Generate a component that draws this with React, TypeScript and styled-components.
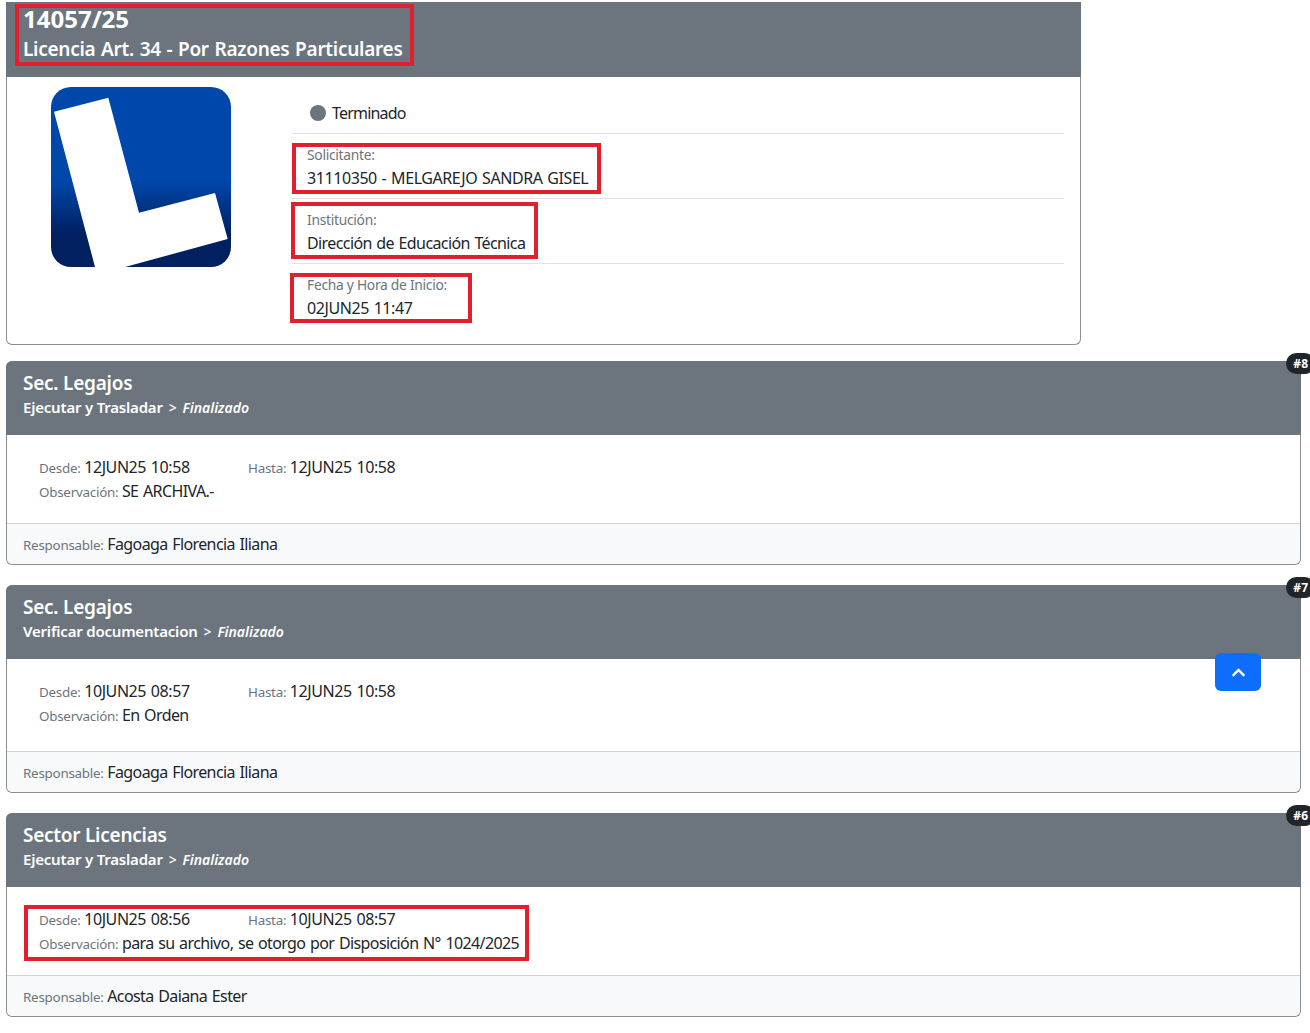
import React from 'react'
import styled, { createGlobalStyle } from 'styled-components'
import { FaChevronUp } from 'react-icons/fa'

const GlobalStyle = createGlobalStyle`
  html, body {
    margin: 0;
    height: 1033px;
    overflow: hidden;
    background: #fff;
  }
  body {
    font-family: "Noto Sans", "Open Sans", sans-serif;
    font-size: 16px;
    line-height: 24px;
    color: #212529;
    letter-spacing: -0.6px;
    word-spacing: 1px;
  }
`

const Page = styled.div`
  padding: 2px 9px 0 6px;
  display: flex;
  flex-direction: column;
  align-items: flex-start;
`

const Card = styled.section<{ $gap: number; $narrow?: boolean }>`
  position: relative;
  box-sizing: border-box;
  width: ${(p) => (p.$narrow ? '1075px' : '1295px')};
  margin-bottom: ${(p) => p.$gap}px;
  border: 1px solid #8b8f93;
  border-top: 0;
  border-radius: 6px;
  background: #fff;
`

const Header = styled.header`
  margin: 0 -1px;
  background: #6c757d;
  color: #fff;
  height: 74px;
  box-sizing: border-box;
  padding: 10px 17px 0;
  border-radius: 6px 6px 0 0;
`

const MainHeader = styled(Header)`
  height: 75px;
  padding-top: 2px;
  border-radius: 0;
`

const CaseNumber = styled.h1`
  margin: 0;
  font-size: 24px;
  line-height: 29px;
  font-weight: 700;
  letter-spacing: 0;
`

const CaseTitle = styled.h2`
  margin: 4px 0 0;
  font-size: 19px;
  line-height: 24px;
  font-weight: 600;
  letter-spacing: -0.27px;
`

const Sector = styled.h3`
  margin: 0;
  font-size: 19px;
  line-height: 24px;
  font-weight: 600;
  letter-spacing: -0.25px;
  word-spacing: 0;
`

const Step = styled.div`
  display: flex;
  align-items: baseline;
  font-size: 15px;
  line-height: 24px;
  font-weight: 600;
  letter-spacing: -0.2px;
  word-spacing: 0;
`

const StepArrow = styled.span`
  margin: 0 6px;
  font-size: 14px;
  font-weight: 500;
`

const StepState = styled.em`
  font-size: 14px;
  font-weight: 600;
  letter-spacing: 0;
`

const Marked = styled.div<{ $inset: string }>`
  position: relative;
  display: inline-block;
  vertical-align: top;

  &::after {
    content: '';
    position: absolute;
    inset: ${(p) => p.$inset};
    border: 4px solid #e0202c;
    pointer-events: none;
  }
`

const Summary = styled.div`
  display: flex;
  align-items: flex-start;
  padding: 0 16px 16px 44px;
`

const Logo = styled.svg`
  flex: none;
  width: 180px;
  height: 180px;
  margin-top: 10px;
`

const InfoList = styled.div`
  flex: 1;
  margin: 16px 0 0 61px;
`

const InfoRow = styled.div`
  padding: 8px 15px;
  border-bottom: 1px solid #dee2e6;

  &:last-child {
    border-bottom: 0;
  }
`

const StatusRow = styled(InfoRow)`
  display: flex;
  align-items: center;
  gap: 6px;
  padding-left: 18px;
  letter-spacing: -0.8px;
`

const StatusDot = styled.span`
  width: 16px;
  height: 16px;
  border-radius: 50%;
  background: #6c757d;
`

const FieldLabel = styled.div`
  padding-top: 1px;
  margin-bottom: -1px;
  font-size: 13.8px;
  letter-spacing: -0.27px;
  word-spacing: 0;
  color: #6c757d;
`

const Label = styled.span`
  margin-right: -1px;
  font-size: 13.4px;
  line-height: 1;
  letter-spacing: -0.25px;
  color: #6c757d;
`

/* dates and upper-case codes run a little wider than running text */
const Code = styled.span`
  letter-spacing: -0.42px;
`

const Details = styled.div<{ $bottom: number }>`
  padding: 20px 16px ${(p) => p.$bottom}px 32px;
`

const DateRow = styled.div`
  display: flex;
`

const DateCell = styled.div`
  width: 209px;
`

const Footer = styled.footer`
  box-sizing: border-box;
  height: 41px;
  padding: 8px 16px 0;
  background: #f8f9fa;
  border-top: 1px solid #cfd2d5;
  border-radius: 0 0 6px 6px;
`

const Badge = styled.span`
  position: absolute;
  top: -8px;
  right: -15px;
  height: 21px;
  padding: 0 7px;
  border-radius: 11px;
  background: #212529;
  color: #fff;
  font-size: 12px;
  line-height: 21px;
  font-weight: 700;
  letter-spacing: 0;
`

const ScrollTop = styled.button`
  position: fixed;
  left: 1215px;
  top: 653px;
  width: 46px;
  height: 38px;
  display: flex;
  align-items: center;
  justify-content: center;
  border: 0;
  border-radius: 6px;
  background: #0d6efd;
  color: #fff;
  font-size: 15px;
`

interface Movement {
  id: number
  sector: string
  step: string
  from: string
  to: string
  note: string
  owner: string
  bottom: number
  marked?: boolean
}

const movements: Movement[] = [
  { id: 8, sector: 'Sec. Legajos', step: 'Ejecutar y Trasladar', from: '12JUN25 10:58', to: '12JUN25 10:58', note: 'SE ARCHIVA.-', owner: 'Fagoaga Florencia Iliana', bottom: 20 },
  { id: 7, sector: 'Sec. Legajos', step: 'Verificar documentacion', from: '10JUN25 08:57', to: '12JUN25 10:58', note: 'En Orden', owner: 'Fagoaga Florencia Iliana', bottom: 24 },
  { id: 6, sector: 'Sector Licencias', step: 'Ejecutar y Trasladar', from: '10JUN25 08:56', to: '10JUN25 08:57', note: 'para su archivo, se otorgo por Disposición N° 1024/2025', owner: 'Acosta Daiana Ester', bottom: 20, marked: true },
]

const LicenseLogo = () => (
  <Logo viewBox="0 0 180 180">
    <defs>
      <linearGradient id="logoBlue" x1="0" y1="0" x2="0" y2="1">
        <stop offset="0.52" stopColor="#0047ab" />
        <stop offset="0.82" stopColor="#00205f" />
      </linearGradient>
      <clipPath id="logoClip">
        <rect width="180" height="180" rx="20" />
      </clipPath>
    </defs>
    <g clipPath="url(#logoClip)">
      <rect width="180" height="180" fill="url(#logoBlue)" />
      <polygon points="3,24.7 57.3,10.7 88,125.7 164,106 176.7,152 74,180 44,180" fill="#fff" />
    </g>
  </Logo>
)

const MovementBody = ({ item }: { item: Movement }) => (
  <>
    <DateRow>
      <DateCell>
        <Label>Desde:</Label> <Code>{item.from}</Code>
      </DateCell>
      <div>
        <Label>Hasta:</Label> <Code>{item.to}</Code>
      </div>
    </DateRow>
    <div>
      <Label>Observación:</Label> {item.note}
    </div>
  </>
)

export default function App() {
  return (
    <Page>
      <GlobalStyle />
      <Card $narrow $gap={16}>
        <MainHeader>
          <Marked $inset="0 -11px -5px -8px">
            <CaseNumber>14057/25</CaseNumber>
            <CaseTitle>Licencia Art. 34 - Por Razones Particulares</CaseTitle>
          </Marked>
        </MainHeader>
        <Summary>
          <LicenseLogo />
          <InfoList>
            <StatusRow>
              <StatusDot />
              Terminado
            </StatusRow>
            <InfoRow>
              <Marked $inset="1px -13px -4px -15px">
                <FieldLabel>Solicitante:</FieldLabel>
                <Code>31110350 - MELGAREJO SANDRA GISEL</Code>
              </Marked>
            </InfoRow>
            <InfoRow>
              <Marked $inset="-5px -13px -4px -16px">
                <FieldLabel>Institución:</FieldLabel>
                Dirección de Educación Técnica
              </Marked>
            </InfoRow>
            <InfoRow>
              <Marked $inset="1px -25px -3px -17px">
                <FieldLabel>Fecha y Hora de Inicio:</FieldLabel>
                <Code>02JUN25 11:47</Code>
              </Marked>
            </InfoRow>
          </InfoList>
        </Summary>
      </Card>

      {movements.map((item) => (
        <Card key={item.id} $gap={20}>
          <Header>
            <Sector>{item.sector}</Sector>
            <Step>
              {item.step}
              <StepArrow>&gt;</StepArrow>
              <StepState>Finalizado</StepState>
            </Step>
          </Header>
          <Badge>#{item.id}</Badge>
          <Details $bottom={item.bottom}>
            {item.marked ? (
              <Marked $inset="-2px -10px -6px -15px">
                <MovementBody item={item} />
              </Marked>
            ) : (
              <MovementBody item={item} />
            )}
          </Details>
          <Footer>
            <Label>Responsable:</Label> {item.owner}
          </Footer>
        </Card>
      ))}

      <ScrollTop aria-label="Volver arriba">
        <FaChevronUp />
      </ScrollTop>
    </Page>
  )
}
